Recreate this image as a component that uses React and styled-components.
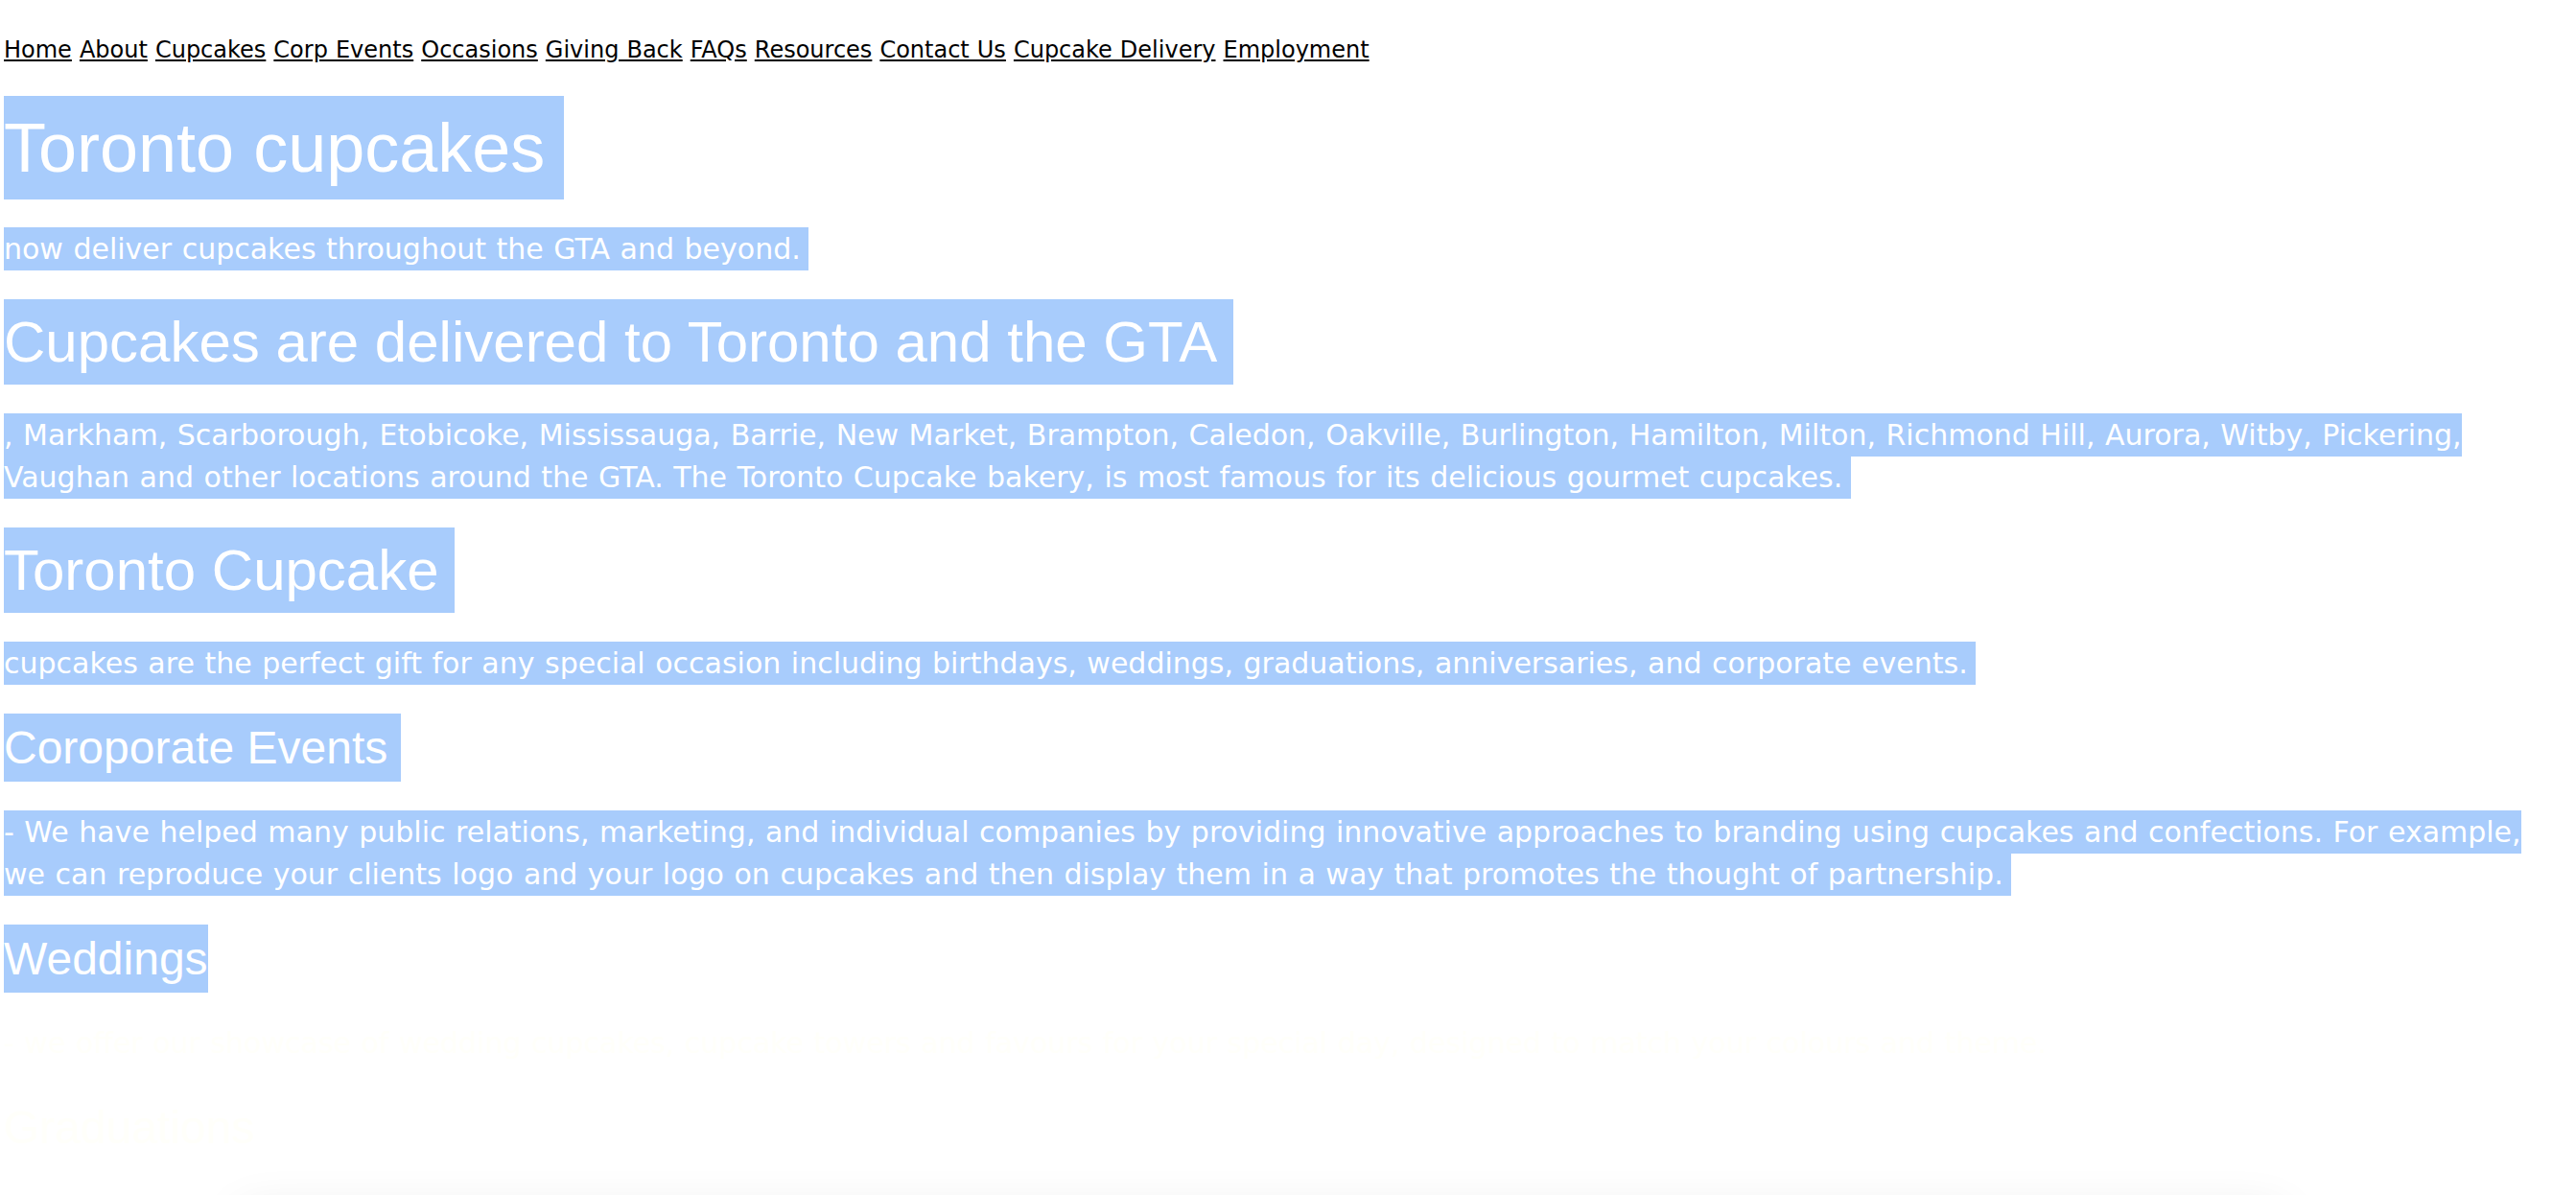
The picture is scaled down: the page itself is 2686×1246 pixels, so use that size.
import React from 'react';
import styled, { createGlobalStyle } from 'styled-components';

const GlobalStyle = createGlobalStyle`
  html, body {
    margin: 0;
    background: #ffffff;
  }
`

const Page = styled.div`
  padding: 4px 22px 0 4px;
  font-family: Verdana, "DejaVu Sans", sans-serif;
  color: #fffffa;
  overflow: hidden;
`

const Nav = styled.p`
  margin: 30px 0;
  font-size: 24px;
  line-height: 36px;
  word-spacing: 0.4px;
`

const NavLink = styled.a`
  color: #000000;
  text-decoration: underline;
`

const Heading = styled.h1`
  margin: 30px 0;
  font-family: "Liberation Sans", Arial, sans-serif;
  font-weight: normal;
  font-size: ${p => p.$size}px;
  line-height: 1.5;
`

const Text = styled.p`
  margin: 30px 0;
  font-size: 30px;
  line-height: 44px;
  word-spacing: 1px;
`

// highlighted run: vertical padding fills the line box like a text selection
const Marked = styled.span`
  background: #a8ccfc;
  color: #ffffff;
  padding: ${p => p.$pad}em ${p => (p.$trail ? '0.28em' : '0')} ${p => p.$pad}em 0;
`

const BottomBar = styled.div`
  position: fixed;
  left: 250px;
  width: 2130px;
  top: 1262px;
  height: 80px;
  background: #ffffff;
  box-shadow: 0 0 50px rgba(0, 0, 0, 0.09);
`

const links = [
  'Home', 'About', 'Cupcakes', 'Corp Events', 'Occasions', 'Giving Back',
  'FAQs', 'Resources', 'Contact Us', 'Cupcake Delivery', 'Employment',
]

const HEAD_PAD = 0.1915
const TEXT_PAD = 0.151

const App = () => {
  return (
    <Page>
      <GlobalStyle />
      <Nav>
        {links.map((l, i) => (
          <React.Fragment key={l}>
            <NavLink href="#">{l}</NavLink>{i < links.length - 1 ? ' ' : ''}
          </React.Fragment>
        ))}
      </Nav>

      <Heading $size={72}>
        <Marked $pad={HEAD_PAD} $trail>Toronto cupcakes</Marked>
      </Heading>
      <Text>
        <Marked $pad={TEXT_PAD} $trail>now deliver cupcakes throughout the GTA and beyond.</Marked>
      </Text>

      <Heading as="h2" $size={60}>
        <Marked $pad={HEAD_PAD} $trail>Cupcakes are delivered to Toronto and the GTA</Marked>
      </Heading>
      <Text>
        <Marked $pad={TEXT_PAD} $trail>
          , Markham, Scarborough, Etobicoke, Mississauga, Barrie, New Market, Brampton, Caledon, Oakville, Burlington, Hamilton, Milton, Richmond Hill, Aurora, Witby, Pickering, Vaughan and other locations around the GTA. The Toronto Cupcake bakery, is most famous for its delicious gourmet cupcakes.
        </Marked>
      </Text>

      <Heading as="h2" $size={60}>
        <Marked $pad={HEAD_PAD} $trail>Toronto Cupcake</Marked>
      </Heading>
      <Text>
        <Marked $pad={TEXT_PAD} $trail>
          cupcakes are the perfect gift for any special occasion including birthdays, weddings, graduations, anniversaries, and corporate events.
        </Marked>
      </Text>

      <Heading as="h3" $size={48}>
        <Marked $pad={HEAD_PAD} $trail>Coroporate Events</Marked>
      </Heading>
      <Text>
        <Marked $pad={TEXT_PAD} $trail>
          - We have helped many public relations, marketing, and individual companies by providing innovative approaches to branding using cupcakes and confections. For example, we can reproduce your clients logo and your logo on cupcakes and then display them in a way that promotes the thought of partnership.
        </Marked>
      </Text>

      <Heading as="h3" $size={48}>
        <Marked $pad={HEAD_PAD}>Weddings</Marked>
      </Heading>
      <Text>
        - we offer our showcase of wedding cupcakes, cupcake towers and favours for your special day, designed to match your colours and theme.
      </Text>
      <Heading as="h3" $size={48}>Graduations</Heading>

      <BottomBar />
    </Page>
  )
}

export default App;
